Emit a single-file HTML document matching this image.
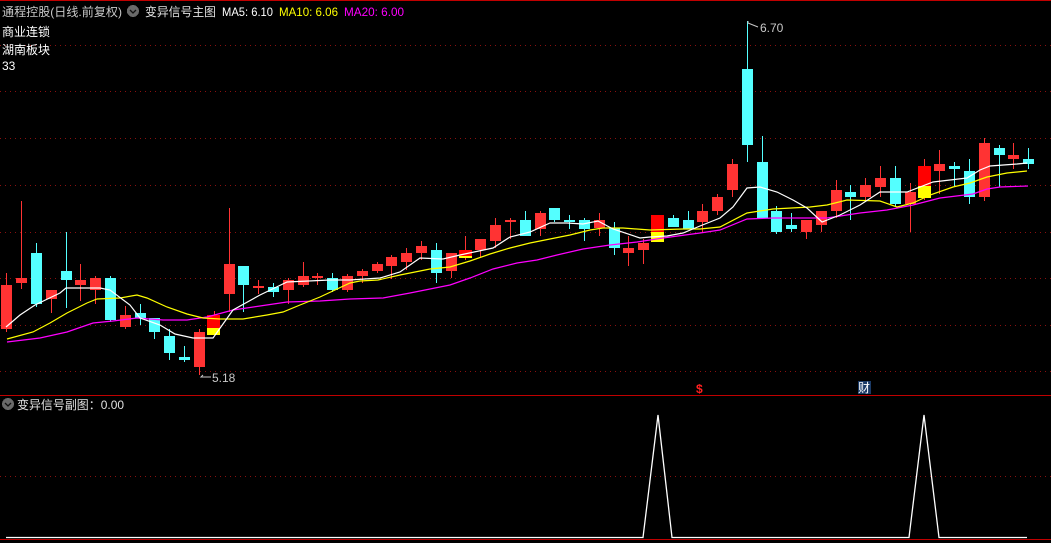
<!DOCTYPE html>
<html><head><meta charset="utf-8"><style>
html,body{margin:0;padding:0;background:#000;width:1051px;height:543px;overflow:hidden}
svg{display:block}
text{font-family:"Liberation Sans","Noto Sans CJK SC",sans-serif;font-size:12px}
</style></head><body>
<svg width="1051" height="543" viewBox="0 0 1051 543" xmlns="http://www.w3.org/2000/svg" shape-rendering="crispEdges">
<rect width="1051" height="543" fill="#000"/>
<line x1="0" y1="0.5" x2="1051" y2="0.5" stroke="#c00000"/>
<g stroke="#8a1010" stroke-dasharray="1,4">
<line x1="0" y1="45.5" x2="1051" y2="45.5"/>
<line x1="0" y1="91.5" x2="1051" y2="91.5"/>
<line x1="0" y1="138.5" x2="1051" y2="138.5"/>
<line x1="0" y1="185.5" x2="1051" y2="185.5"/>
<line x1="0" y1="232.5" x2="1051" y2="232.5"/>
<line x1="0" y1="278.5" x2="1051" y2="278.5"/>
<line x1="0" y1="325.5" x2="1051" y2="325.5"/>
<line x1="0" y1="371.5" x2="1051" y2="371.5"/>
<line x1="0" y1="476.5" x2="1051" y2="476.5"/>
</g>
<line x1="0" y1="395.5" x2="1051" y2="395.5" stroke="#c00000"/>
<line x1="0" y1="539.5" x2="1051" y2="539.5" stroke="#c00000"/>

<g>
<g fill="#ff3333">
<rect x="6" y="273" width="1" height="59"/><rect x="1" y="285" width="11" height="44"/>
<rect x="21" y="201" width="1" height="88"/><rect x="16" y="278" width="11" height="5"/>
<rect x="51" y="290" width="1" height="23"/><rect x="46" y="290" width="11" height="9"/>
<rect x="80" y="264" width="1" height="37"/><rect x="75" y="280" width="11" height="5"/>
<rect x="95" y="276" width="1" height="28"/><rect x="90" y="278" width="11" height="12"/>
<rect x="125" y="306" width="1" height="23"/><rect x="120" y="315" width="11" height="12"/>
<rect x="199" y="329" width="1" height="46"/><rect x="194" y="332" width="11" height="35"/>
<rect x="229" y="208" width="1" height="104"/><rect x="224" y="264" width="11" height="30"/>
<rect x="258" y="280" width="1" height="14"/><rect x="253" y="286" width="11" height="2"/>
<rect x="288" y="278" width="1" height="26"/><rect x="283" y="280" width="11" height="10"/>
<rect x="303" y="262" width="1" height="25"/><rect x="298" y="276" width="11" height="9"/>
<rect x="317" y="273" width="1" height="12"/><rect x="312" y="276" width="11" height="2"/>
<rect x="347" y="274" width="1" height="18"/><rect x="342" y="276" width="11" height="14"/>
<rect x="362" y="269" width="1" height="14"/><rect x="357" y="271" width="11" height="5"/>
<rect x="377" y="262" width="1" height="11"/><rect x="372" y="264" width="11" height="7"/>
<rect x="391" y="255" width="1" height="24"/><rect x="386" y="257" width="11" height="9"/>
<rect x="406" y="248" width="1" height="22"/><rect x="401" y="253" width="11" height="9"/>
<rect x="421" y="241" width="1" height="19"/><rect x="416" y="246" width="11" height="7"/>
<rect x="451" y="253" width="1" height="25"/><rect x="446" y="253" width="11" height="18"/>
<rect x="480" y="239" width="1" height="18"/><rect x="475" y="239" width="11" height="11"/>
<rect x="495" y="218" width="1" height="30"/><rect x="490" y="225" width="11" height="16"/>
<rect x="510" y="218" width="1" height="21"/><rect x="505" y="220" width="11" height="2"/>
<rect x="540" y="211" width="1" height="25"/><rect x="535" y="213" width="11" height="16"/>
<rect x="599" y="213" width="1" height="23"/><rect x="594" y="220" width="11" height="8"/>
<rect x="628" y="236" width="1" height="30"/><rect x="623" y="248" width="11" height="5"/>
<rect x="643" y="239" width="1" height="25"/><rect x="638" y="243" width="11" height="7"/>
<rect x="702" y="204" width="1" height="28"/><rect x="697" y="211" width="11" height="11"/>
<rect x="717" y="194" width="1" height="21"/><rect x="712" y="197" width="11" height="14"/>
<rect x="732" y="159" width="1" height="38"/><rect x="727" y="164" width="11" height="26"/>
<rect x="806" y="220" width="1" height="19"/><rect x="801" y="220" width="11" height="12"/>
<rect x="821" y="211" width="1" height="21"/><rect x="816" y="211" width="11" height="14"/>
<rect x="836" y="180" width="1" height="38"/><rect x="831" y="190" width="11" height="21"/>
<rect x="865" y="178" width="1" height="22"/><rect x="860" y="185" width="11" height="12"/>
<rect x="880" y="166" width="1" height="31"/><rect x="875" y="178" width="11" height="9"/>
<rect x="910" y="183" width="1" height="49"/><rect x="905" y="192" width="11" height="12"/>
<rect x="939" y="150" width="1" height="44"/><rect x="934" y="164" width="11" height="7"/>
<rect x="984" y="138" width="1" height="63"/><rect x="979" y="143" width="11" height="54"/>
<rect x="1013" y="143" width="1" height="26"/><rect x="1008" y="155" width="11" height="4"/>
</g>
<g fill="#54ffff">
<rect x="36" y="243" width="1" height="64"/><rect x="31" y="253" width="11" height="51"/>
<rect x="66" y="232" width="1" height="76"/><rect x="61" y="271" width="11" height="9"/>
<rect x="110" y="276" width="1" height="46"/><rect x="105" y="278" width="11" height="42"/>
<rect x="140" y="304" width="1" height="21"/><rect x="135" y="313" width="11" height="5"/>
<rect x="154" y="318" width="1" height="21"/><rect x="149" y="318" width="11" height="14"/>
<rect x="169" y="329" width="1" height="31"/><rect x="164" y="336" width="11" height="17"/>
<rect x="184" y="346" width="1" height="16"/><rect x="179" y="357" width="11" height="3"/>
<rect x="243" y="266" width="1" height="46"/><rect x="238" y="266" width="11" height="19"/>
<rect x="273" y="283" width="1" height="14"/><rect x="268" y="287" width="11" height="5"/>
<rect x="332" y="273" width="1" height="19"/><rect x="327" y="278" width="11" height="12"/>
<rect x="436" y="243" width="1" height="40"/><rect x="431" y="250" width="11" height="23"/>
<rect x="525" y="211" width="1" height="25"/><rect x="520" y="220" width="11" height="16"/>
<rect x="554" y="208" width="1" height="14"/><rect x="549" y="208" width="11" height="12"/>
<rect x="569" y="215" width="1" height="14"/><rect x="564" y="220" width="11" height="2"/>
<rect x="584" y="218" width="1" height="23"/><rect x="579" y="220" width="11" height="9"/>
<rect x="614" y="222" width="1" height="33"/><rect x="609" y="228" width="11" height="20"/>
<rect x="673" y="215" width="1" height="12"/><rect x="668" y="218" width="11" height="9"/>
<rect x="688" y="211" width="1" height="18"/><rect x="683" y="220" width="11" height="9"/>
<rect x="747" y="21" width="1" height="141"/><rect x="742" y="69" width="11" height="76"/>
<rect x="762" y="136" width="1" height="82"/><rect x="757" y="162" width="11" height="56"/>
<rect x="776" y="206" width="1" height="28"/><rect x="771" y="211" width="11" height="21"/>
<rect x="791" y="213" width="1" height="19"/><rect x="786" y="225" width="11" height="4"/>
<rect x="850" y="185" width="1" height="35"/><rect x="845" y="192" width="11" height="5"/>
<rect x="895" y="166" width="1" height="41"/><rect x="890" y="178" width="11" height="26"/>
<rect x="954" y="162" width="1" height="24"/><rect x="949" y="166" width="11" height="3"/>
<rect x="969" y="159" width="1" height="45"/><rect x="964" y="171" width="11" height="26"/>
<rect x="999" y="145" width="1" height="42"/><rect x="994" y="148" width="11" height="7"/>
<rect x="1028" y="148" width="1" height="21"/><rect x="1023" y="159" width="11" height="5"/>
</g>
<rect x="214" y="311" width="1" height="4" fill="#ff3333"/>
<rect x="207" y="315" width="13" height="13" fill="#ff0000"/><rect x="207" y="328" width="13" height="7" fill="#ffff00"/>
<rect x="465" y="236" width="1" height="24" fill="#ff3333"/>
<rect x="459" y="250" width="13" height="6" fill="#ff0000"/><rect x="459" y="256" width="13" height="2" fill="#ffff00"/>
<rect x="651" y="215" width="13" height="17" fill="#ff0000"/><rect x="651" y="232" width="13" height="10" fill="#ffff00"/>
<rect x="924" y="159" width="1" height="41" fill="#ff3333"/>
<rect x="918" y="166" width="13" height="20" fill="#ff0000"/><rect x="918" y="186" width="13" height="12" fill="#ffff00"/>
</g>

<g fill="none" stroke-width="1.2" shape-rendering="auto">
<polyline stroke="#ff00ff" points="7,342 40,338 67,332 93,323 113,321 137,318 163,320 187,320 207,317 233,310 260,306 287,302 320,301 350,299 383,298 410,293 430,289 450,285 470,278 493,269 517,263 537,260 557,255 583,249 610,245 637,242 663,238 700,233 720,230 747,219 773,218 827,218 860,213 887,210 913,205 940,198 973,194 987,189 1000,187 1028,186"/>
<polyline stroke="#ffff00" points="7,339 33,332 50,323 67,313 87,303 97,299 120,298 137,295 147,298 167,307 187,314 203,318 220,319 243,319 267,315 283,312 300,305 320,297 350,283 360,281 378,280 400,275 430,269 450,267 470,261 490,254 510,248 530,243 550,239 570,235 590,230 603,228 623,228 650,230 683,229 700,229 720,227 747,213 773,209 810,207 827,205 847,200 880,201 897,207 913,203 930,195 953,187 970,183 987,177 1007,173 1027,171"/>
<polyline stroke="#ffffff" points="6,327 20,315 35,305 60,293 66,288 100,288 110,290 130,305 140,318 160,325 175,334 193,338 213,338 233,310 260,295 287,282 330,280 350,280 380,278 400,272 420,258 443,259 460,255 493,248 510,237 530,232 550,223 567,223 583,224 598,221 613,229 640,238 650,237 667,236 683,233 700,226 720,218 733,207 747,188 760,187 777,192 793,200 807,208 822,222 840,215 860,205 880,192 907,192 933,182 967,178 980,170 990,166 1017,164 1027,163"/>
</g>

<g fill="#c8c8c8" shape-rendering="auto">
<polyline points="211,377 201,377 203,375" fill="none" stroke="#c8c8c8"/>
<text x="212" y="382">5.18</text>
<polyline points="758,27 748,23 748,21" fill="none" stroke="#c8c8c8"/>
<text x="760" y="32">6.70</text>
</g>
<text x="696" y="393" fill="#ff2020" font-weight="bold">$</text>
<rect x="858" y="381" width="13" height="13" fill="#1b3a66"/>
<text x="858" y="392" fill="#ffffff">财</text>

<text x="2" y="16" fill="#c8c8c8" textLength="120" lengthAdjust="spacingAndGlyphs">通程控股(日线.前复权)</text>
<circle cx="133" cy="11" r="6" fill="#6a6a6a"/>
<polyline points="130,10 133,13 136,10" fill="none" stroke="#111" stroke-width="1.3" shape-rendering="auto"/>
<text x="145" y="16" fill="#e0e0e0" textLength="71" lengthAdjust="spacingAndGlyphs">变异信号主图</text>
<text x="222" y="16" fill="#ffffff" textLength="51" lengthAdjust="spacingAndGlyphs">MA5: 6.10</text>
<text x="279" y="16" fill="#ffff00" textLength="59" lengthAdjust="spacingAndGlyphs">MA10: 6.06</text>
<text x="344" y="16" fill="#ff00ff" textLength="60" lengthAdjust="spacingAndGlyphs">MA20: 6.00</text>
<text x="2" y="36" fill="#ffffff" textLength="48" lengthAdjust="spacingAndGlyphs">商业连锁</text>
<text x="2" y="54" fill="#ffffff" textLength="48" lengthAdjust="spacingAndGlyphs">湖南板块</text>
<text x="2" y="70" fill="#ffffff">33</text>

<circle cx="8" cy="404" r="6" fill="#6a6a6a"/>
<polyline points="5,403 8,406 11,403" fill="none" stroke="#111" stroke-width="1.3" shape-rendering="auto"/>
<text x="17" y="409" fill="#e0e0e0" textLength="107" lengthAdjust="spacingAndGlyphs">变异信号副图：0.00</text>
<polyline fill="none" stroke="#ffffff" stroke-width="1.3" shape-rendering="auto" points="6,537.5 643,537.5 658,415 672,537.5 909,537.5 924,415 939,537.5 1027,537.5"/>
</svg>
</body></html>
